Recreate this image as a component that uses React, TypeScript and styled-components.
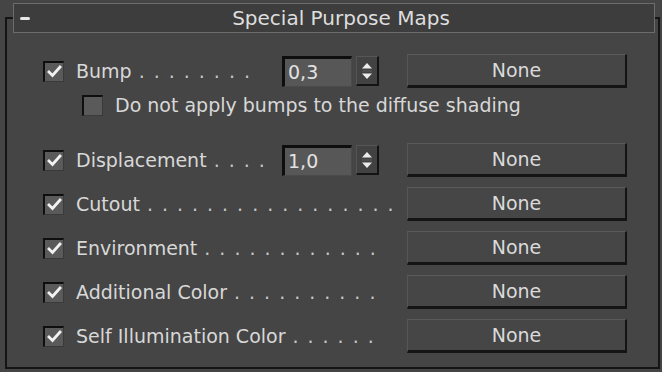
import React from 'react'
import styled, { createGlobalStyle } from 'styled-components'

const GlobalStyle = createGlobalStyle`
  html, body {
    margin: 0;
    padding: 0;
    background: #454545;
  }
  body {
    font-family: "DejaVu Sans", Verdana, sans-serif;
    color: #d8d8d8;
  }
`

const Rollout = styled.div`
  width: 662px;
  height: 372px;
  box-sizing: border-box;
  padding: 17px 2px 0 5px;
  background: #454545;
`

const Frame = styled.div`
  height: 352px;
  box-sizing: border-box;
  border: 2px solid #151515;
  display: flex;
  flex-direction: column;
`

const Header = styled.div`
  margin: -16px 3px 0 6px;
  height: 30px;
  box-sizing: border-box;
  border: 1px solid #6c6c6c;
  background: #3d3d3d;
  display: flex;
  align-items: center;
`

const Collapse = styled.span`
  width: 10px;
  height: 3px;
  margin-left: 6px;
  border-radius: 2px;
  background: #e8e8e8;
`

const Title = styled.div`
  flex: 1;
  text-align: center;
  font-size: 20px;
  color: #dedede;
  padding-right: 2px;
`

const Body = styled.div`
  padding: 21px 31px 0 36px;
  display: flex;
  flex-direction: column;
`

const Row = styled.div<{ $top: number }>`
  display: flex;
  align-items: center;
  height: 34px;
  margin-top: ${p => p.$top}px;
`

const SubRow = styled.div`
  display: flex;
  align-items: center;
  height: 24px;
  margin-top: 5px;
  padding-left: 39px;
`

const LabelArea = styled.div`
  flex: 1;
  min-width: 0;
  display: flex;
  align-items: center;
  white-space: nowrap;
  overflow: hidden;
`

const Box = styled.span`
  flex: none;
  width: 21px;
  height: 21px;
  box-sizing: border-box;
  border-top: 2px solid #0f0f0f;
  border-left: 2px solid #0f0f0f;
  border-right: 1px solid #3a3a3a;
  border-bottom: 1px solid #3a3a3a;
  background: #5a5a5a;
  margin-right: 12px;
  display: flex;
  align-items: center;
  justify-content: center;
`

const Label = styled.span`
  font-size: 19px;
  color: #d8d8d8;
`

const Dots = styled.span`
  font-size: 19px;
  color: #c8c8c8;
  margin-left: 7px;
  letter-spacing: 9px;
`

const Spinner = styled.div`
  display: flex;
  align-items: center;
  gap: 4px;
  margin-right: 28px;
`

const Field = styled.div`
  width: 70px;
  height: 31px;
  box-sizing: border-box;
  border-top: 3px solid #0e0e0e;
  border-left: 3px solid #0e0e0e;
  border-right: 1px solid #4a4a4a;
  border-bottom: 1px solid #4a4a4a;
  background: #575757;
  font-size: 19px;
  color: #e2e2e2;
  padding-left: 3px;
  display: flex;
  align-items: center;
`

const Arrows = styled.div`
  width: 23px;
  height: 30px;
  box-sizing: border-box;
  border-top: 1px solid #555;
  border-left: 1px solid #555;
  border-right: 2px solid #141414;
  border-bottom: 2px solid #141414;
  background: #424242;
  display: flex;
  align-items: center;
  justify-content: center;
`

const NoneButton = styled.button`
  width: 220px;
  height: 34px;
  box-sizing: border-box;
  border-top: 1px solid #5a5a5a;
  border-left: 1px solid #565656;
  border-right: 2px solid #141414;
  border-bottom: 3px solid #141414;
  background: #464646;
  color: #dadada;
  font-family: inherit;
  font-size: 19px;
  padding: 0;
`

const Check = ({ on }: { on: boolean }) => (
  <Box>
    {on && (
      <svg width="15" height="13" viewBox="0 0 15 13">
        <polyline points="2,7 5.5,10.5 13,2" fill="none" stroke="#f2f2f2" strokeWidth="2.8" strokeLinecap="square" />
      </svg>
    )}
  </Box>
)

const SpinArrows = () => (
  <Arrows>
    <svg width="14" height="24" viewBox="0 0 14 24">
      <polygon points="7,4 12,9.5 2,9.5" fill="#ececec" />
      <line x1="2" y1="12" x2="12" y2="12" stroke="#5a5a5a" strokeWidth="1" />
      <polygon points="2,14.5 12,14.5 7,20" fill="#ececec" />
    </svg>
  </Arrows>
)

interface MapRow {
  label: string
  dots: number
  value?: string
}

const rows: MapRow[] = [
  { label: 'Displacement', dots: 4, value: '1,0' },
  { label: 'Cutout', dots: 17 },
  { label: 'Environment', dots: 12 },
  { label: 'Additional Color', dots: 10 },
  { label: 'Self Illumination Color', dots: 6 }
]

const MapLine = ({ row, top }: { row: MapRow; top: number }) => (
  <Row $top={top}>
    <LabelArea>
      <Check on />
      <Label>{row.label}</Label>
      <Dots>{'.'.repeat(row.dots)}</Dots>
    </LabelArea>
    {row.value && (
      <Spinner>
        <Field>{row.value}</Field>
        <SpinArrows />
      </Spinner>
    )}
    <NoneButton>None</NoneButton>
  </Row>
)

export default function App() {
  return (
    <>
      <GlobalStyle />
      <Rollout>
        <Frame>
          <Header>
            <Collapse />
            <Title>Special Purpose Maps</Title>
          </Header>
          <Body>
            <MapLine row={{ label: 'Bump', dots: 8, value: '0,3' }} top={0} />
            <SubRow>
              <Check on={false} />
              <Label>Do not apply bumps to the diffuse shading</Label>
            </SubRow>
            {rows.map((r, i) => (
              <MapLine key={r.label} row={r} top={i === 0 ? 26 : 10} />
            ))}
          </Body>
        </Frame>
      </Rollout>
    </>
  )
}
